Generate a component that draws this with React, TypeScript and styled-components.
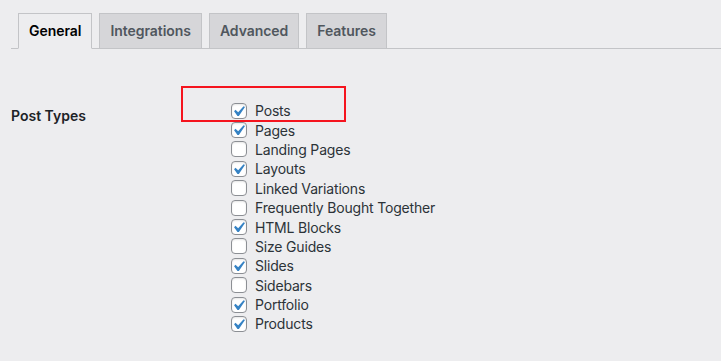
import React from "react";
import styled, { createGlobalStyle } from "styled-components";

const GlobalStyle = createGlobalStyle`
  html, body {
    margin: 0;
    padding: 0;
    background: #ededef;
  }
  body {
    font-family: Inter, "Liberation Sans", Arial, sans-serif;
    color: #3c434a;
    font-size: 14px;
  }
`;

const Page = styled.div`
  width: 721px;
  height: 361px;
  overflow: hidden;
  background: #ededef;
`;

const TabBar = styled.nav`
  display: flex;
  align-items: flex-end;
  margin: 13px 0 0 11px;
  border-bottom: 1px solid #c3c4c7;
  height: 35px;
`;

const Tab = styled.a<{ $active?: boolean }>`
  display: block;
  box-sizing: border-box;
  height: 36px;
  margin: 0 0 -1px 7px;
  padding: 5px 10px;
  border: 1px solid #c3c4c7;
  border-bottom-color: ${(p) => (p.$active ? "#ededef" : "#c3c4c7")};
  background: ${(p) => (p.$active ? "#ededef" : "#d6d6d9")};
  color: ${(p) => (p.$active ? "#000" : "#50575e")};
  font-size: 14px;
  font-weight: 600;
  line-height: 24px;
  letter-spacing: -0.05px;
  text-decoration: none;
  white-space: nowrap;
`;

const FormRow = styled.section`
  position: relative;
  display: flex;
  margin: 37px 0 0 11px;
`;

const RowLabel = styled.div`
  box-sizing: border-box;
  width: 210px;
  padding: 21px 10px 20px 0;
  font-size: 14px;
  font-weight: 600;
  line-height: 18.2px;
  color: #1d2327;
`;

const Options = styled.div`
  padding: 15px 10px;
  display: flex;
  flex-direction: column;
`;

const Option = styled.label`
  display: flex;
  align-items: center;
  height: 19.4px;
  font-size: 14px;
  letter-spacing: -0.18px;
  color: #2c3338;
`;

const Box = styled.span`
  position: relative;
  box-sizing: border-box;
  flex: none;
  width: 16px;
  height: 16px;
  margin-right: 8px;
  border: 1px solid #8c8f94;
  border-radius: 4px;
  background: #fff;
  box-shadow: inset 0 1px 2px rgba(0, 0, 0, 0.1);
`;

const Tick = styled.svg`
  position: absolute;
  left: -4px;
  top: -3px;
  width: 21px;
  height: 21px;
`;

const Highlight = styled.div`
  position: absolute;
  left: 170px;
  top: 0;
  box-sizing: border-box;
  width: 165px;
  height: 36px;
  border: 2px solid #f5141e;
  pointer-events: none;
`;

const tabs = ["General", "Integrations", "Advanced", "Features"];

const items: [string, boolean][] = [
  ["Posts", true],
  ["Pages", true],
  ["Landing Pages", false],
  ["Layouts", true],
  ["Linked Variations", false],
  ["Frequently Bought Together", false],
  ["HTML Blocks", true],
  ["Size Guides", false],
  ["Slides", true],
  ["Sidebars", false],
  ["Portfolio", true],
  ["Products", true],
];

function Checkbox({ checked }: { checked: boolean }) {
  return (
    <Box>
      {checked && (
        <Tick viewBox="0 0 20 20">
          <path
            d="M14.83 4.89l1.34.94-5.81 8.38H9.02L5.78 9.67l1.34-1.25 2.57 2.4z"
            fill="#3582c4"
          />
        </Tick>
      )}
    </Box>
  );
}

export default function App() {
  return (
    <Page>
      <GlobalStyle />
      <TabBar>
        {tabs.map((t, i) => (
          <Tab key={t} $active={i === 0}>
            {t}
          </Tab>
        ))}
      </TabBar>
      <FormRow>
        <RowLabel>Post Types</RowLabel>
        <Options>
          {items.map(([name, checked]) => (
            <Option key={name}>
              <Checkbox checked={checked} />
              {name}
            </Option>
          ))}
        </Options>
        <Highlight />
      </FormRow>
    </Page>
  );
}
